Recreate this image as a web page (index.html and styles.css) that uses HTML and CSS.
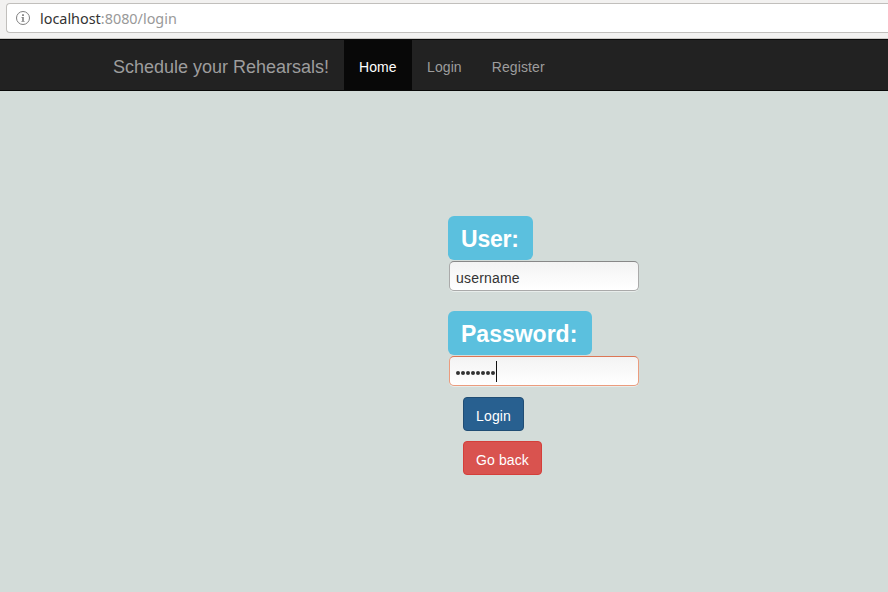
FILE: index.html
```html
<!DOCTYPE html>
<html lang="en">
<head>
<meta charset="utf-8">
<title>Login</title>
<link rel="stylesheet" href="styles.css">
</head>
<body>
<div class="browser">
  <div class="address">
    <svg class="info" width="16" height="16" viewBox="0 0 16 16"><circle cx="8" cy="8" r="6.5" fill="none" stroke="#808080" stroke-width="1"/><path d="M7.1 4.2h1.8v1.7H7.1zM6.4 7h2.4v4h.8v.8H6.4V11h.8V7.8h-.8z" fill="#808080"/></svg>
    <span class="url"><span class="host">localhost</span>:8080/login</span>
  </div>
</div>
<nav class="navbar">
  <a class="brand">Schedule your Rehearsals!</a>
  <a class="link active">Home</a>
  <a class="link">Login</a>
  <a class="link">Register</a>
</nav>
<main class="form">
  <div class="group">
    <label class="tag user">User:</label>
    <div class="field"><span class="value">username</span></div>
  </div>
  <div class="group">
    <label class="tag password">Password:</label>
    <div class="field focused"><span class="dots"><i></i><i></i><i></i><i></i><i></i><i></i><i></i><i></i></span><span class="caret"></span></div>
  </div>
  <div class="actions">
    <button class="btn primary">Login</button>
    <button class="btn danger">Go back</button>
  </div>
</main>
</body>
</html>
```
FILE: styles.css
```css
* { box-sizing: border-box; }
body {
  margin: 0;
  height: 592px;
  overflow: hidden;
  background: #d3dcd9;
  color: #333;
  font: 14px/20px "Liberation Sans", Arial, sans-serif;
}
.browser {
  height: 39px;
  padding: 3px 0 0 6px;
  background: #f2f1f0;
  border-bottom: 1px solid #cbc9c6;
}
.address {
  display: flex;
  align-items: center;
  height: 30px;
  padding-left: 8px;
  background: #fff;
  border: 1px solid #c1bfbc;
  border-right: 0;
  border-radius: 4px 0 0 4px;
}
.info { flex: none; }
.url {
  margin-left: 9px;
  padding-top: 2px;
  color: #999;
  font: 14.4px/20px "Noto Sans", sans-serif;
  white-space: nowrap;
}
.host { color: #333; }
.navbar {
  display: flex;
  height: 52px;
  padding-left: 98px;
  background: #222;
  border: solid #080808;
  border-width: 1px 0;
  color: #9d9d9d;
}
.brand {
  width: 246px;
  padding: 17px 15px 13px;
  font-size: 18px;
  white-space: nowrap;
}
.link { padding: 17px 15px 13px; letter-spacing: 0.1px; }
.active { width: 68px; background: #080808; color: #fff; }
.form { padding: 125px 0 0 448px; }
.group { height: 95px; }
.tag {
  display: block;
  width: 85px;
  height: 44px;
  padding-left: 13px;
  background: #5bc0de;
  border-radius: 6px;
  color: #fff;
  font-size: 23px;
  font-weight: bold;
  line-height: 46px;
  white-space: nowrap;
}
.user { letter-spacing: -0.2px; }
.password { width: 144px; }
.field {
  display: flex;
  align-items: center;
  width: 190px;
  height: 30px;
  margin: 1px 0 0 1px;
  padding: 3px 6px 0;
  background: linear-gradient(#f3f3f3, #fff);
  border: 1px solid #aaa;
  border-top-color: #888;
  border-radius: 5px;
  box-shadow: 0 1px #e8edeb;
}
.value { letter-spacing: 0.2px; }
.focused {
  padding-top: 0;
  border-color: #eb9c7e;
  border-top-color: #dc7655;
}
.dots { display: flex; gap: 1px; padding: 4px 1px 0 0; }
.dots i { width: 4px; height: 4px; border-radius: 50%; background: #333; }
.caret { width: 1px; height: 21px; background: #111; }
.actions {
  display: flex;
  flex-direction: column;
  align-items: flex-start;
  gap: 10px;
  margin: -9px 0 0 15px;
}
.btn {
  height: 34px;
  padding: 3px 12px 0;
  border: 1px solid;
  border-radius: 4px;
  color: #fff;
  font: inherit;
  letter-spacing: 0.1px;
  white-space: nowrap;
}
.primary { width: 61px; background: #286090; border-color: #204d74; }
.danger { width: 79px; background: #d9534f; border-color: #d43f3a; }
```
